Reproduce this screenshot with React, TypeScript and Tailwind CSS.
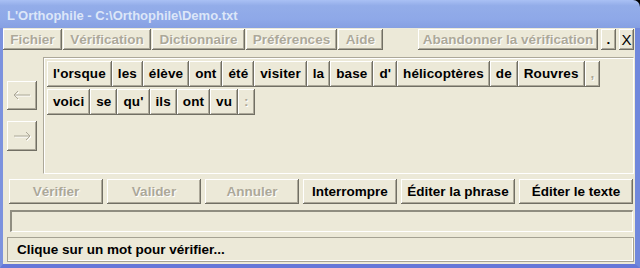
const raised =
  'shadow-[inset_-1px_-1px_#716f64,inset_1px_1px_#ffffff,inset_-2px_-2px_#aca899] bg-[#ece9d8]';
const disabledText = 'text-[#aca899] [text-shadow:1px_1px_0_#ffffff]';

const menu = [
  { label: 'Fichier', w: 'w-[59px]' },
  { label: 'Vérification', w: 'w-[88px]' },
  { label: 'Dictionnaire', w: 'w-[93px]' },
  { label: 'Préférences', w: 'w-[91px]' },
  { label: 'Aide', w: 'w-[45px]' },
];

const rows = [
  ["l'orsque", 'les', 'élève', 'ont', 'été', 'visiter', 'la', 'base', "d'", 'hélicoptères', 'de', 'Rouvres', ','],
  ['voici', 'se', "qu'", 'ils', 'ont', 'vu', ':'],
];

const actions = [
  { label: 'Vérifier', w: 'w-[94px]', off: true },
  { label: 'Valider', w: 'w-[94px]', off: true },
  { label: 'Annuler', w: 'w-[94px]', off: true },
  { label: 'Interrompre', w: 'w-[94px]', off: false },
  { label: 'Éditer la phrase', w: 'w-[114px]', off: false },
  { label: 'Éditer le texte', w: 'w-[114px]', off: false },
];

function Arrow({ dir }: { dir: 'left' | 'right' }) {
  const d = dir === 'left' ? 'M2 5 L6 1 M2 5 L6 9 M2 5 H18' : 'M18 5 L14 1 M18 5 L14 9 M2 5 H18';
  return (
    <svg width="21" height="11" viewBox="0 0 21 11" fill="none">
      <path d={d} transform="translate(1 1)" stroke="#ffffff" strokeWidth="1" />
      <path d={d} stroke="#aca899" strokeWidth="1" />
    </svg>
  );
}

export default function App() {
  return (
    <div className="w-[640px] h-[268px] flex flex-col overflow-hidden bg-black font-['Liberation_Sans',Arial,sans-serif] font-bold text-[13.5px] leading-none select-none">
      <div className="h-[28px] shrink-0 flex items-center pl-[7px] pt-[3px] rounded-tr-[7px] bg-[linear-gradient(to_bottom,#a9c0f4_0%,#93ade9_20%,#8ea8e8_70%,#86a0e2_100%)] text-[13px] text-[#dce6f8]">
        L'Orthophile - C:\Orthophile\Demo.txt
      </div>

      <div className="flex-1 flex border-l-[3px] border-r-[5px] border-b-[4px] border-l-[#7c92de] border-r-[#7088dc] border-b-[#6577d8]">
        <div className="flex-1 flex flex-col bg-[#ece9d8]">
          <div className="mt-[1px] h-[21px] flex gap-[1px] pr-[1px]">
            {menu.map(m => (
              <div key={m.label} className={`${m.w} ${raised} ${disabledText} flex items-center justify-center`}>
                {m.label}
              </div>
            ))}
            <div className="flex-1" />
            <div className={`w-[180px] ${raised} ${disabledText} flex items-center justify-center`}>
              Abandonner la vérification
            </div>
            <div className={`ml-[2px] w-[15px] ${raised} flex items-end justify-center pb-[4px] text-black`}>.</div>
            <div className={`ml-[2px] w-[15px] ${raised} flex items-center justify-center text-black text-[15px] font-normal`}>
              X
            </div>
          </div>

          <div className="mt-[7px] h-[117px] flex pr-[1px]">
            <div className="w-[40px] pl-[4px] pt-[24px] flex flex-col gap-[11px]">
              <div className={`w-[30px] h-[29px] ${raised} flex items-center justify-center`}>
                <Arrow dir="left" />
              </div>
              <div className={`w-[30px] h-[30px] ${raised} flex items-center justify-center`}>
                <Arrow dir="right" />
              </div>
            </div>
            <div className="flex-1 border border-t-[#aca899] border-l-[#aca899] border-b-[#ffffff] border-r-[#ffffff] shadow-[inset_1px_1px_#ffffff] p-[3px] flex flex-col gap-[2px] tracking-[0.1px]">
              {rows.map((row, i) => (
                <div key={i} className="flex">
                  {row.map((w, j) => {
                    const punct = w === ',' || w === ':';
                    return (
                      <div
                        key={j}
                        className={`h-[26px] ${raised} flex items-center px-[6px] ${punct ? disabledText : 'text-black'}`}
                      >
                        {w}
                      </div>
                    );
                  })}
                </div>
              ))}
            </div>
          </div>

          <div className="mt-[5px] h-[25px] flex gap-[4px] pl-[6px]">
            {actions.map(a => (
              <div
                key={a.label}
                className={`${a.w} ${raised} flex items-center justify-center ${a.off ? disabledText : 'text-black'}`}
              >
                {a.label}
              </div>
            ))}
          </div>

          <div className="mt-[6px] ml-[7px] mr-[2px] h-[22px] border-t-2 border-l-2 border-t-[#8f8d80] border-l-[#8f8d80] border-b border-r border-b-white border-r-white" />

          <div className="mt-[5px] ml-[4px] mr-[1px] h-[25px] flex items-center pl-[9px] border border-[#a5a293] shadow-[inset_-1px_-1px_#ffffff] text-black">
            Clique sur un mot pour vérifier...
          </div>
        </div>
      </div>
    </div>
  );
}
